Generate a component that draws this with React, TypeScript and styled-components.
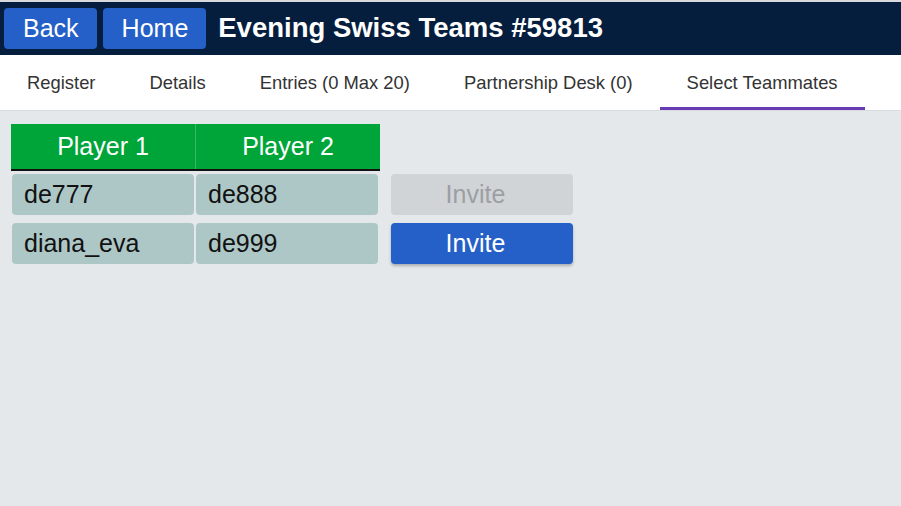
import React from 'react';
import styled, {createGlobalStyle} from 'styled-components';

const GlobalStyle = createGlobalStyle`
  html, body {
    margin: 0;
    padding: 0;
    height: 100%;
    background: #e4e8eb;
    font-family: 'Liberation Sans', Arial, sans-serif;
  }
  #root {
    min-height: 100%;
  }
`;

const Page = styled.div`
  min-height: 506px;
  display: flex;
  flex-direction: column;
  background: #e4e8eb;
  border-top: 2px solid #d8dadd;
`;

const Header = styled.header`
  height: 53px;
  box-sizing: border-box;
  background: #051e3d;
  display: flex;
  align-items: center;
  gap: 6px;
  padding: 0 4px 1px 4px;
`;

const NavButton = styled.button`
  height: 41px;
  padding: 0 18px 0 19px;
  border: none;
  border-radius: 4px;
  background: #2560c9;
  color: #fff;
  font-family: 'Liberation Sans', Arial, sans-serif;
  font-size: 25px;
  line-height: 41px;
  cursor: pointer;
`;

const Title = styled.h1`
  margin: 0 0 0 6px;
  color: #fff;
  font-size: 27.5px;
  font-weight: 700;
  line-height: 1;
`;

const TabBar = styled.nav`
  height: 56px;
  box-sizing: border-box;
  background: #fff;
  display: flex;
  border-bottom: 1px solid #d9dcdf;
`;

const Tab = styled.div<{$active?: boolean}>`
  padding: 4px 27px 0;
  display: flex;
  align-items: center;
  color: #333;
  font-size: 18.4px;
  box-sizing: border-box;
  border-bottom: 3px solid ${p => (p.$active ? '#683bb5' : 'transparent')};
`;

const Content = styled.main`
  padding: 13px 11px;
  display: flex;
  flex-direction: column;
`;

const TableHead = styled.div`
  width: 369px;
  display: flex;
  background: #00a539;
  border-bottom: 2px solid #111;
  margin-bottom: 3px;
`;

const HeadCell = styled.div`
  flex: 1;
  height: 45px;
  display: flex;
  align-items: center;
  justify-content: center;
  color: #fff;
  font-size: 25px;
  & + & {
    border-left: 1px solid #3cb863;
  }
`;

const Rows = styled.div`
  display: flex;
  flex-direction: column;
  gap: 8px;
`;

const Row = styled.div`
  display: flex;
  gap: 2px;
  padding-left: 1px;
`;

const Cell = styled.div`
  width: 182px;
  height: 41px;
  box-sizing: border-box;
  padding-left: 12px;
  border-radius: 4px;
  background: #adc7c7;
  color: #111;
  font-size: 25px;
  display: flex;
  align-items: center;
`;

const InviteButton = styled.button`
  width: 182px;
  height: 41px;
  margin-left: 11px;
  padding: 0 13px 0 0;
  border: none;
  border-radius: 4px;
  font-family: 'Liberation Sans', Arial, sans-serif;
  font-size: 25px;
  background: #2560c9;
  color: #fff;
  box-shadow: 0 2px 3px rgba(0, 0, 0, 0.25);
  cursor: pointer;
  &:disabled {
    background: #d0d4d7;
    color: #9c9fa3;
    box-shadow: none;
    cursor: default;
  }
`;

const tabs = ['Register', 'Details', 'Entries (0 Max 20)', 'Partnership Desk (0)', 'Select Teammates'];

const pairs = [
  {p1: 'de777', p2: 'de888', canInvite: false},
  {p1: 'diana_eva', p2: 'de999', canInvite: true},
];

export default function App() {
  return (
    <Page>
      <GlobalStyle />
      <Header>
        <NavButton>Back</NavButton>
        <NavButton>Home</NavButton>
        <Title>Evening Swiss Teams #59813</Title>
      </Header>
      <TabBar>
        {tabs.map(t => (
          <Tab key={t} $active={t === 'Select Teammates'}>
            {t}
          </Tab>
        ))}
      </TabBar>
      <Content>
        <TableHead>
          <HeadCell>Player 1</HeadCell>
          <HeadCell>Player 2</HeadCell>
        </TableHead>
        <Rows>
          {pairs.map(r => (
            <Row key={r.p1}>
              <Cell>{r.p1}</Cell>
              <Cell>{r.p2}</Cell>
              <InviteButton disabled={!r.canInvite}>Invite</InviteButton>
            </Row>
          ))}
        </Rows>
      </Content>
    </Page>
  );
}
